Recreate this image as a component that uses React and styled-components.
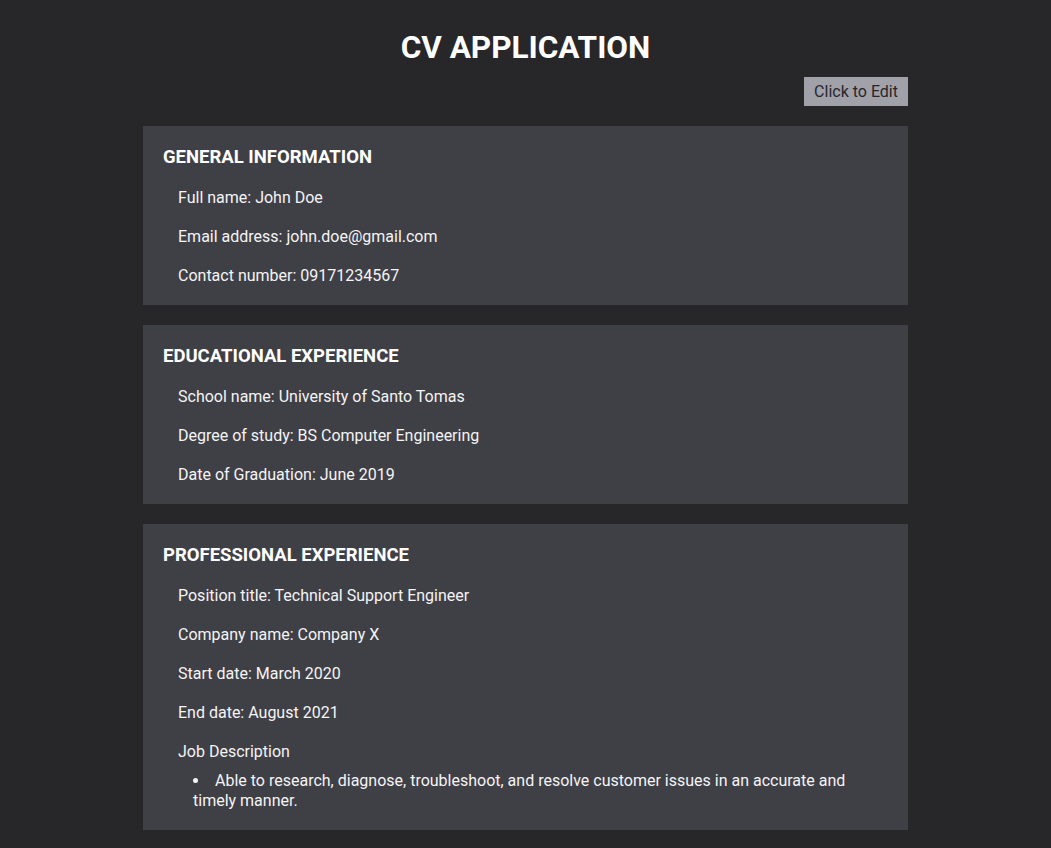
import React from "react";
import styled, { createGlobalStyle } from "styled-components";

const Global = createGlobalStyle`
  html, body { margin: 0; padding: 0; background: #27272a; }
  body { font-family: Roboto, "Liberation Sans", sans-serif; color: #f4f4f5; }
`;

const Page = styled.div`
  display: flex;
  flex-direction: column;
  align-items: center;
  padding: 29px 0 20px;
  min-height: 100vh;
  box-sizing: border-box;
  background: #27272a;
`;

const Title = styled.h1`
  margin: 0;
  font-size: 31.5px;
  font-weight: 700;
  line-height: 38px;
  color: #ffffff;
`;

const Container = styled.div`
  width: 765px;
  display: flex;
  flex-direction: column;
  gap: 20px;
`;

const Toolbar = styled.div`
  display: flex;
  justify-content: flex-end;
  margin-top: 10px;
`;

const EditButton = styled.button`
  font-family: Roboto, "Liberation Sans", sans-serif;
  font-size: 16px;
  line-height: 20px;
  height: 29px;
  padding: 0 10px;
  border: none;
  border-radius: 0;
  background: #a1a1aa;
  color: #27272a;
  cursor: pointer;
`;

const Card = styled.section`
  background: #3f3f46;
  padding: 20px;
  display: flex;
  flex-direction: column;
  gap: 20px;
`;

const CardTitle = styled.h2`
  margin: 0;
  font-size: 18.5px;
  line-height: 22px;
  font-weight: 700;
  color: #ffffff;
`;

const Field = styled.p`
  margin: 0 0 0 ${(p) => (p.$flush ? 0 : 15)}px;
  font-size: 16px;
  line-height: 19px;
  color: #f4f4f5;
`;

const Description = styled.div`
  margin-left: 15px;
  display: flex;
  flex-direction: column;
  gap: 10px;
`;

const DescList = styled.ul`
  margin: 0;
  padding: 0 40px 0 15px;
  list-style: none;
  font-size: 16px;
  line-height: 19.5px;
  color: #f4f4f5;
`;

const DescItem = styled.li`
  &::before {
    content: "";
    display: inline-block;
    width: 5px;
    height: 5px;
    border-radius: 50%;
    background: #f4f4f5;
    margin-right: 17px;
    vertical-align: 3px;
  }
`;

const sections = [
  {
    title: "GENERAL INFORMATION",
    fields: [
      "Full name: John Doe",
      "Email address: john.doe@gmail.com",
      "Contact number: 09171234567",
    ],
  },
  {
    title: "EDUCATIONAL EXPERIENCE",
    fields: [
      "School name: University of Santo Tomas",
      "Degree of study: BS Computer Engineering",
      "Date of Graduation: June 2019",
    ],
  },
];

export default function App() {
  return (
    <>
      <Global />
      <Page>
        <Title>CV APPLICATION</Title>
        <Container>
          <Toolbar>
            <EditButton>Click to Edit</EditButton>
          </Toolbar>
          {sections.map((s) => (
            <Card key={s.title}>
              <CardTitle>{s.title}</CardTitle>
              {s.fields.map((f) => (
                <Field key={f}>{f}</Field>
              ))}
            </Card>
          ))}
          <Card>
            <CardTitle>PROFESSIONAL EXPERIENCE</CardTitle>
            <Field>Position title: Technical Support Engineer</Field>
            <Field>Company name: Company X</Field>
            <Field>Start date: March 2020</Field>
            <Field>End date: August 2021</Field>
            <Description>
              <Field as="div" $flush>Job Description</Field>
              <DescList>
                <DescItem>
                  Able to research, diagnose, troubleshoot, and resolve customer issues in an accurate and timely manner.
                </DescItem>
              </DescList>
            </Description>
          </Card>
        </Container>
      </Page>
    </>
  );
}
